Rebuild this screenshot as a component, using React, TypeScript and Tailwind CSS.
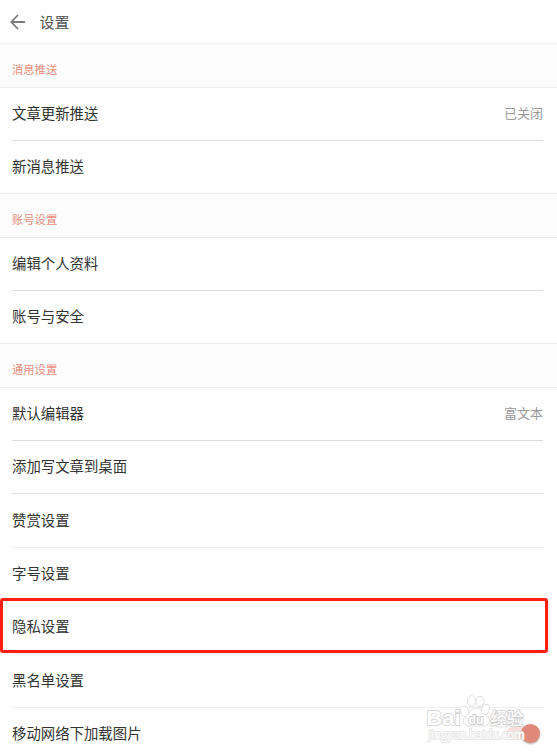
import { clsx } from 'clsx';

type Item = {
  label: string;
  value?: string;
  height?: string;
  line?: string;
  highlighted?: boolean;
  toggle?: boolean;
};

type Section = { title: string; items: Item[] };

const SECTIONS: Section[] = [
  {
    title: '消息推送',
    items: [{ label: '文章更新推送', value: '已关闭' }, { label: '新消息推送' }],
  },
  {
    title: '账号设置',
    items: [{ label: '编辑个人资料' }, { label: '账号与安全' }],
  },
  {
    title: '通用设置',
    items: [
      { label: '默认编辑器', value: '富文本' },
      { label: '添加写文章到桌面', line: 'border-[#e4e4e4]' },
      { label: '赞赏设置', height: 'h-[54px]', line: 'border-[#efefef]' },
      { label: '字号设置', line: 'border-[#efefef]' },
      { label: '隐私设置', highlighted: true, line: 'border-[#efefef]' },
      { label: '黑名单设置', height: 'h-[54px]', line: 'border-[#efefef]' },
      { label: '移动网络下加载图片', toggle: true },
    ],
  },
];

const Toggle = () => (
  <div className="relative mr-[3px] h-[13px] w-[34px]">
    <div className="h-[13px] w-[28px] rounded-full bg-[#f9dfdb]" />
    <div className="absolute -top-[3px] right-0 h-[19px] w-[19px] rounded-full bg-[#e08879] shadow-[0_1px_2px_rgba(0,0,0,0.35)]" />
  </div>
);

const Row = ({ item, last }: { item: Item; last: boolean }) => (
  <div className={clsx('relative', item.height ?? 'h-[53px]', last ? 'border-b border-[#ebebeb]' : 'pr-[14px] pl-3')}>
    <div
      className={clsx(
        'flex h-full items-center justify-between pb-[2px]',
        last ? 'pr-[14px] pl-3' : 'border-b',
        !last && (item.line ?? 'border-[#dcdcdc]'),
      )}
    >
      <p className="text-[14.4px] text-[#333333]">{item.label}</p>
      {item.value && <p className="text-[13px] text-[#999999]">{item.value}</p>}
      {item.toggle && <Toggle />}
    </div>
    {item.highlighted && (
      <div className="absolute -top-[3px] left-0 h-[55px] w-[548px] rounded-[3px] border-[3px] border-[#ff1e10]" />
    )}
  </div>
);

/* 右下角水印 */
const Watermark = () => (
  <svg
    className="absolute top-[690px] left-[420px]"
    width="112"
    height="56"
    viewBox="0 0 112 56"
    fill="#ffffff"
    stroke="#dedede"
    strokeWidth="1"
    fontFamily='"Liberation Sans", "Noto Sans CJK SC", sans-serif'
  >
    <path d="M56 18c-4 0-5.500 3.500-8 6-3 2.500-4.500 4-4.500 7 0 3.500 3 5 6 5h14c3.500 0 6-2 6-5.500 0-3-2-4.500-4.500-6.500C62 21.500 60.500 18 56 18z" />
    <ellipse cx="44.500" cy="21.200" rx="4" ry="5.300" transform="rotate(-12 44.5 21.2)" />
    <ellipse cx="51.500" cy="11" rx="4.100" ry="5.400" />
    <ellipse cx="60" cy="11.500" rx="4" ry="5.200" transform="rotate(8 60 11.5)" />
    <ellipse cx="65.500" cy="19.500" rx="3.800" ry="5.200" transform="rotate(15 65.5 19.5)" />
    <g strokeWidth="1.800" paintOrder="stroke" strokeLinejoin="round">
      <text x="6.500" y="35" fontSize="21" fontWeight="bold" stroke="#d8d8d8" textLength="34" lengthAdjust="spacingAndGlyphs">Bai</text>
      <text x="48.500" y="34" fontSize="13" fontWeight="bold" stroke="#cccccc" textLength="15" lengthAdjust="spacingAndGlyphs">du</text>
      <text x="70.500" y="34.500" fontSize="16.500" fontWeight="500" stroke="#d2d2d2" textLength="33" lengthAdjust="spacingAndGlyphs">经验</text>
      <text x="8.500" y="49" fontSize="12" fontFamily='"Open Sans", sans-serif' stroke="#e6e6e6" textLength="96" lengthAdjust="spacingAndGlyphs">jingyan.baidu.com</text>
    </g>
  </svg>
);

const App = () => {
  return (
    <div className="relative h-[755px] w-[557px] overflow-hidden bg-white font-['Noto_Sans_CJK_SC',sans-serif]">
      <header className="flex h-11 items-center border-b border-[#f1f1f1] pl-[10px]">
        <svg width="16" height="16" viewBox="0 0 16 16" fill="none" stroke="#7b7b7b" strokeWidth="1.8">
          <path d="M8 1L1.300 8L8 15M1.500 8H15" />
        </svg>
        <h1 className="mt-px ml-[13.5px] text-[15px] text-[#555555]">设置</h1>
      </header>

      {SECTIONS.map((section, s) => (
        <section key={section.title}>
          <div className="flex h-11 items-center border-b border-[#eeeeee] bg-[#fcfcfc] pt-[7px] pl-3">
            <h2 className="text-[11.3px] text-[#e98f80]">{section.title}</h2>
          </div>
          {section.items.map((item, i) => (
            <Row key={item.label} item={item} last={s < 2 && i === section.items.length - 1} />
          ))}
        </section>
      ))}

      <Watermark />
    </div>
  );
};

export default App;
